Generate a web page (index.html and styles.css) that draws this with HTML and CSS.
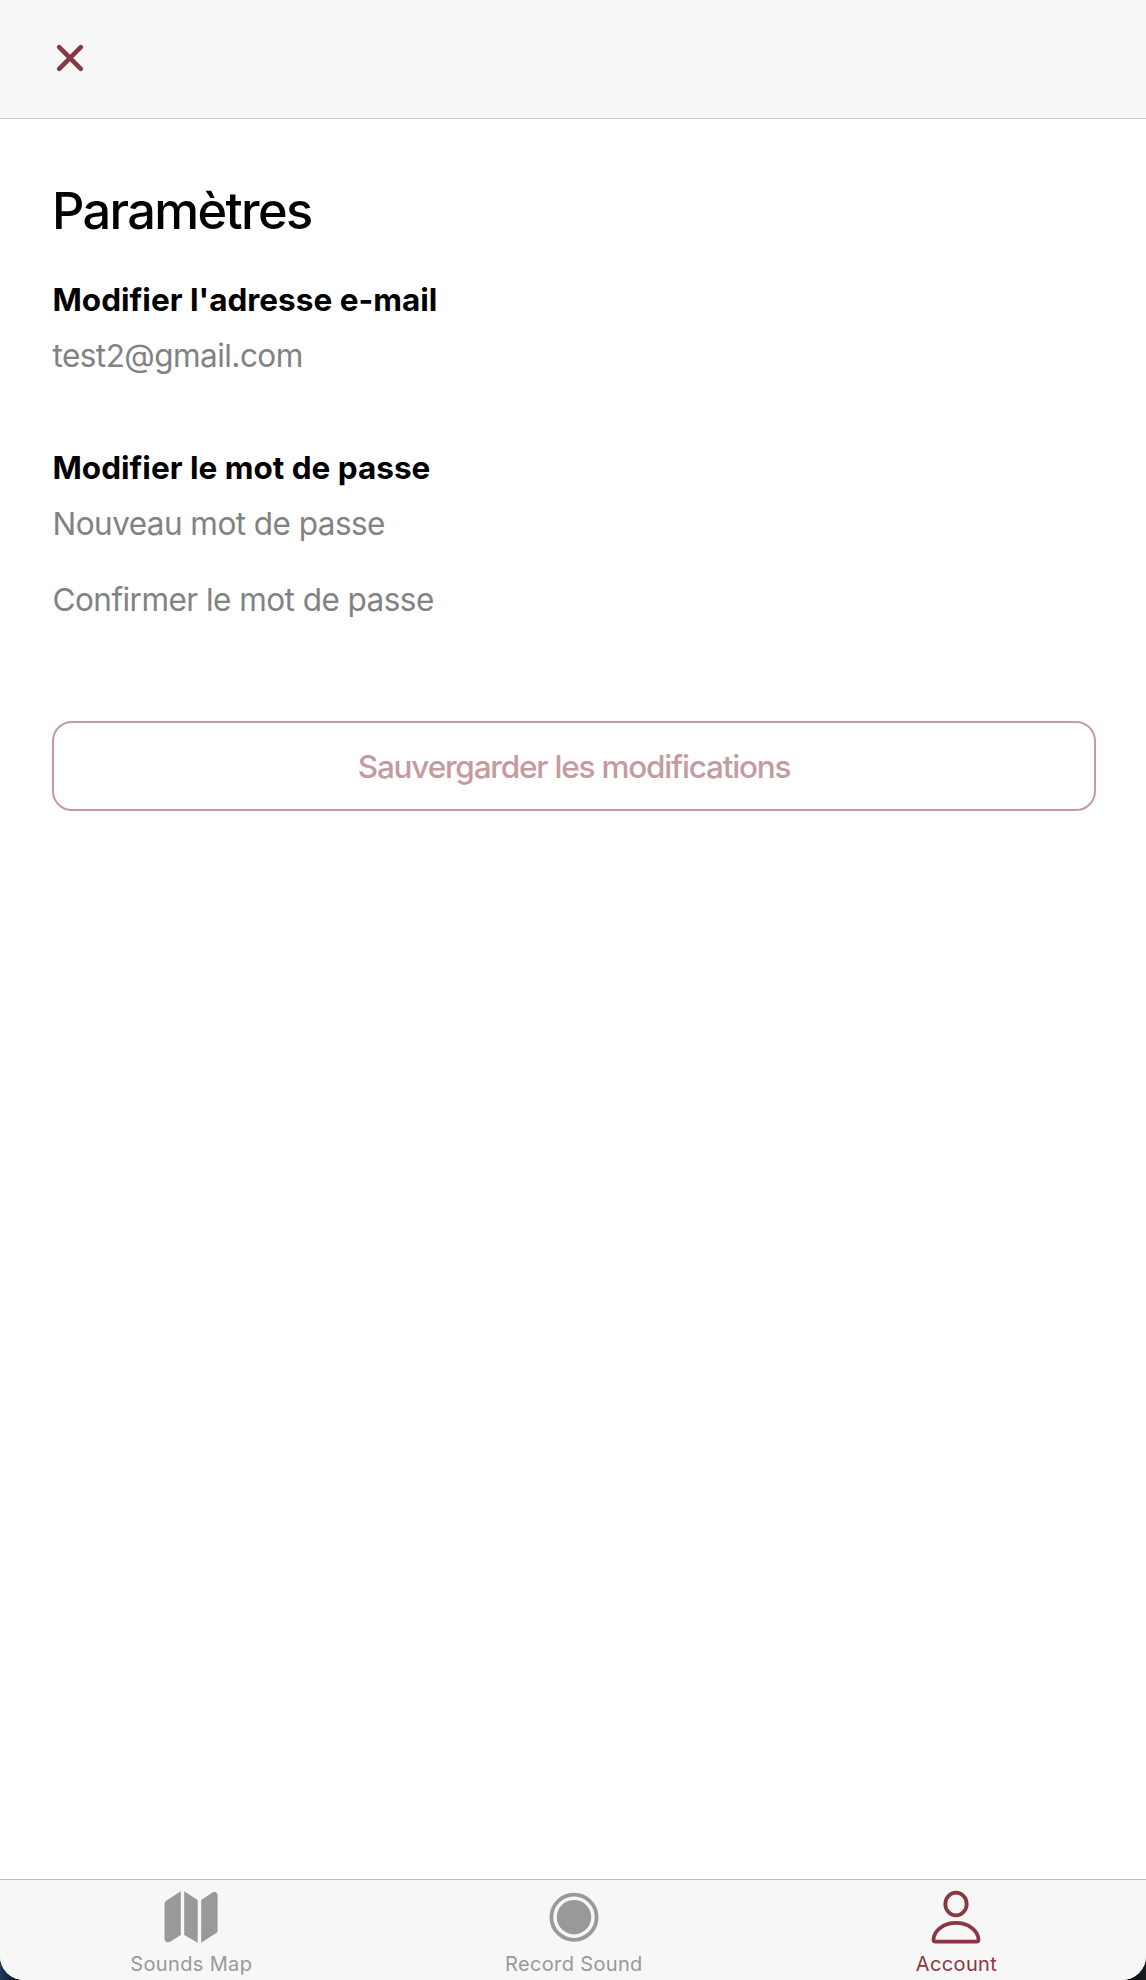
FILE: index.html
```html
<!DOCTYPE html>
<html lang="fr">
<head>
<meta charset="utf-8">
<title>Paramètres</title>
<link rel="stylesheet" href="styles.css">
</head>
<body>
<div class="screen">
  <header class="topbar">
    <button class="close" aria-label="Fermer">
      <svg width="36" height="36" viewBox="0 0 36 36"><path d="M7.2 7.2 28.8 28.8M28.8 7.2 7.2 28.8"/></svg>
    </button>
  </header>
  <main class="content">
    <h1 class="title">Paramètres</h1>
    <section class="group">
      <h2 class="label">Modifier l'adresse e-mail</h2>
      <p class="field">test2@gmail.com</p>
    </section>
    <section class="group">
      <h2 class="label">Modifier le mot de passe</h2>
      <p class="field">Nouveau mot de passe</p>
      <p class="field">Confirmer le mot de passe</p>
    </section>
    <button class="save">Sauvergarder les modifications</button>
  </main>
  <nav class="tabs">
    <a class="tab">
      <svg class="icon-map" width="56" height="56" viewBox="0 0 56 56">
        <path d="M17.8 2.3V46L7.7 52.6Q6 53.6 4 53.3Q1.5 52.8 1.5 50V14.5Q1.5 13 2.8 12Z"/>
        <path d="M21.2 2.2 34.7 11V53.8L21.2 46Z"/>
        <path d="M38.2 11 49.5 3.4Q51 2.5 52.5 3Q54.6 3.8 54.6 6.5V41.5Q54.6 43 53.3 44L38.2 53.8Z"/>
      </svg>
      <span class="name">Sounds Map</span>
    </a>
    <a class="tab">
      <svg class="icon-record" width="56" height="56" viewBox="0 0 56 56">
        <circle class="ring" cx="28" cy="28.2" r="22.6"/>
        <circle class="dot" cx="28" cy="28.2" r="17.2"/>
      </svg>
      <span class="name">Record Sound</span>
    </a>
    <a class="tab tab-active">
      <svg class="icon-account" width="56" height="56" viewBox="0 0 56 56">
        <ellipse cx="28" cy="15" rx="10.7" ry="11.3"/>
        <path d="M7.5 52.7H48.5Q50.5 52.7 50.5 50.5C50.2 41.8 40.5 33.9 28 33.9S5.8 41.8 5.5 50.5Q5.5 52.7 7.5 52.7Z"/>
      </svg>
      <span class="name">Account</span>
    </a>
  </nav>
</div>
</body>
</html>
```
FILE: styles.css
```css
* { box-sizing: border-box; }

body {
  margin: 0;
  background: linear-gradient(90deg, #1c3a5e 0, #000 24px, #000 1122px, #181e20 100%);
  font-family: Inter, "Liberation Sans", sans-serif;
  font-kerning: normal;
}

.screen {
  display: flex;
  flex-direction: column;
  height: 1980px;
  overflow: hidden;
  background: #fff;
  border-radius: 0 0 24px 24px;
}

.topbar {
  flex: none;
  height: 119px;
  padding: 40px 52px;
  background: #f7f7f7;
  border-bottom: 1px solid #c8c8c8;
}

.close {
  display: block;
  padding: 0;
  border: 0;
  background: none;
}

.close svg {
  display: block;
  fill: none;
  stroke: #883842;
  stroke-width: 4.6;
  stroke-linecap: round;
}

.content {
  flex: 1;
  padding: 60px 50px 0 52px;
}

.title {
  margin: 0 0 37px;
  font-size: 50.5px;
  line-height: 64px;
  font-weight: 500;
  letter-spacing: -1.65px;
}

.group {
  margin-bottom: 72px;
  padding-left: 0.5px;
}

.label,
.field {
  margin: 0;
  font-size: 31.5px;
  line-height: 40px;
}

.label {
  margin-bottom: 16px;
  font-weight: 700;
}

.field {
  color: #828282;
  font-weight: 400;
  letter-spacing: -0.54px;
}

.field + .field { margin-top: 36px; }

.save {
  display: flex;
  align-items: center;
  justify-content: center;
  width: 100%;
  height: 90px;
  margin-top: 101px;
  padding: 2px 0 0;
  border: 2px solid #c49b9f;
  border-radius: 20px;
  background: none;
  color: #c49b9f;
  font: 500 31.5px/40px Inter, "Liberation Sans", sans-serif;
  letter-spacing: -1.2px;
}

.tabs {
  flex: none;
  display: grid;
  grid-template-columns: repeat(3, 382.6px);
  height: 101px;
  background: #f7f7f7;
  border-top: 1px solid #bdbdbd;
}

.tab {
  display: flex;
  flex-direction: column;
  align-items: center;
  padding-top: 9px;
  color: #999;
}

.tab svg {
  display: block;
  fill: currentColor;
}

.tab .ring,
.tab .icon-account {
  fill: none;
  stroke: currentColor;
  stroke-width: 3.8;
}

.tab-active { color: #883842; }

.name {
  margin-top: 7px;
  font-size: 20px;
  line-height: 24px;
  font-weight: 400;
  letter-spacing: 0.35px;
}
```
